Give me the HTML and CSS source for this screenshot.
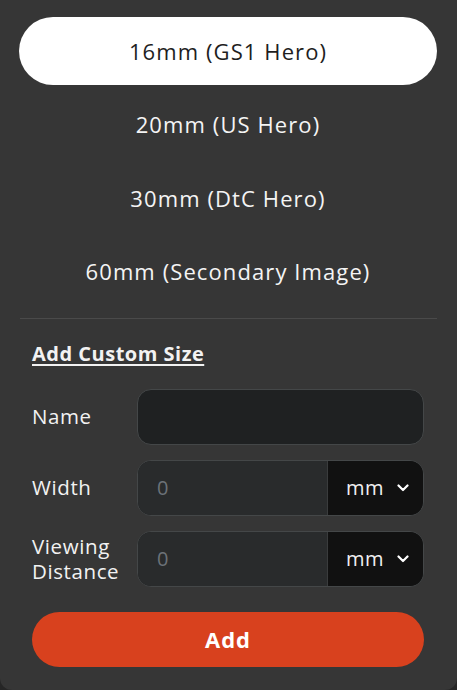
FILE: index.html
```html
<!DOCTYPE html>
<html lang="en">
<head>
<meta charset="utf-8">
<title>Sizes</title>
<link rel="stylesheet" href="styles.css">
</head>
<body>
<div class="panel">
  <ul class="sizes">
    <li class="size is-active">16mm (GS1 Hero)</li>
    <li class="size">20mm (US Hero)</li>
    <li class="size">30mm (DtC Hero)</li>
    <li class="size">60mm (Secondary Image)</li>
  </ul>
  <hr class="divider">
  <form class="custom">
    <h2 class="custom-title">Add Custom Size</h2>
    <div class="row">
      <label class="label" for="name">Name</label>
      <div class="field"><input id="name" class="text" type="text"></div>
    </div>
    <div class="row">
      <label class="label" for="width">Width</label>
      <div class="field">
        <input id="width" class="text num" type="text" placeholder="0">
        <div class="unit"><span>mm</span><svg class="chev" viewBox="0 0 12 8" width="12" height="8"><path d="M1.5 1.5 6 6l4.5-4.5" fill="none" stroke="#fff" stroke-width="2.2" stroke-linecap="round" stroke-linejoin="round"/></svg></div>
      </div>
    </div>
    <div class="row">
      <label class="label" for="dist">Viewing Distance</label>
      <div class="field">
        <input id="dist" class="text num" type="text" placeholder="0">
        <div class="unit"><span>mm</span><svg class="chev" viewBox="0 0 12 8" width="12" height="8"><path d="M1.5 1.5 6 6l4.5-4.5" fill="none" stroke="#fff" stroke-width="2.2" stroke-linecap="round" stroke-linejoin="round"/></svg></div>
      </div>
    </div>
    <button class="add" type="button">Add</button>
  </form>
</div>
</body>
</html>
```

FILE: styles.css
```css
* { box-sizing: border-box; }

html, body {
  margin: 0;
  background: #262626;
}

body {
  font-family: "Open Sans", "Noto Sans", sans-serif;
  color: #f2f2f2;
}

.panel {
  width: 457px;
  height: 690px;
  background: #363636;
  border-radius: 0 0 12px 12px;
  padding: 17px 20px 0 19px;
}

.sizes {
  list-style: none;
  margin: 0;
  padding: 0;
  display: flex;
  flex-direction: column;
  gap: 5.3px;
}

.size {
  height: 68px;
  display: flex;
  align-items: center;
  justify-content: center;
  font-size: 22px;
  letter-spacing: 1.1px;
  font-weight: 500;
  color: #f4f4f4;
  border-radius: 34px;
}

.size.is-active {
  background: #ffffff;
  color: #1e1e1e;
}

.divider {
  border: 0;
  height: 1px;
  background: #4a4a4a;
  margin: 13px 0 0 1px;
}

.custom {
  padding: 0 13px 0 13px;
}

.custom-title {
  margin: 24px 0 0;
  font-size: 20px;
  font-weight: 700;
  line-height: 22px;
  letter-spacing: 0.5px;
  text-decoration: underline;
  text-underline-offset: 3px;
  text-decoration-thickness: 1.5px;
}

.row {
  display: flex;
  align-items: center;
  margin-top: 15px;
}

.row:first-of-type {
  margin-top: 24px;
}

.label {
  width: 105px;
  flex: none;
  font-size: 20.5px;
  letter-spacing: 0.6px;
  line-height: 25px;
  padding-right: 2px;
}

.field {
  flex: 1;
  height: 56px;
  display: flex;
  border: 1px solid #444748;
  border-radius: 14px;
  overflow: hidden;
  background: #1f2122;
}

.text {
  flex: 1;
  min-width: 0;
  border: 0;
  outline: 0;
  background: transparent;
  font: inherit;
  font-size: 20px;
  color: #e8e8e8;
  padding: 0 19px;
}

.text.num {
  background: #292b2c;
}

.text::placeholder {
  color: #6c7278;
}

.unit {
  width: 96px;
  flex: none;
  background: #111111;
  display: flex;
  align-items: center;
  padding: 0 0 0 18px;
  gap: 13px;
  font-size: 20px;
  letter-spacing: 0.4px;
  color: #f0f0f0;
  border-left: 1px solid #3a3c3d;
}

.chev { display: block; }

.add {
  display: block;
  width: 100%;
  height: 55px;
  margin-top: 25px;
  border: 0;
  border-radius: 28px;
  background: #d8411e;
  color: #ffffff;
  font-family: inherit;
  font-size: 22px;
  letter-spacing: 1px;
  font-weight: 700;
}
```
